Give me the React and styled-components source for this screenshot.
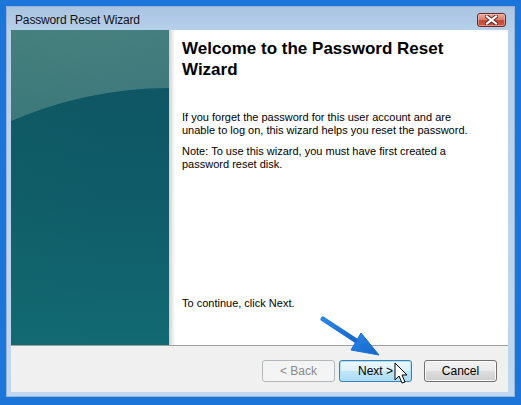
import React from "react";
import styled, { createGlobalStyle } from "styled-components";

const Global = createGlobalStyle`
  html, body { margin: 0; padding: 0; }
  body { background: #1c76da; font-family: "Liberation Sans", Arial, sans-serif; }
`;

const Screen = styled.div`
  width: 521px;
  height: 405px;
  box-sizing: border-box;
  padding: 6px 6px 8px 6px;
  background: #1c76da;
  position: relative;
  overflow: hidden;
`;

const Window = styled.div`
  height: 100%;
  box-sizing: border-box;
  display: flex;
  flex-direction: column;
  padding: 0 7px 5px 5px;
  background: linear-gradient(180deg, #a9c4e2 0px, #b6cfea 24px, #c1d7ef 100%);
  box-shadow: inset 0 0 0 1px #95b4d8;
`;

const TitleBar = styled.div`
  height: 24px;
  box-sizing: border-box;
  display: flex;
  align-items: center;
  justify-content: space-between;
  padding: 3px 2px 0 4px;
`;

const Title = styled.span`
  font-size: 12px;
  color: #111;
  letter-spacing: -0.15px;
`;

const CloseButton = styled.div`
  width: 29px;
  height: 14px;
  box-sizing: border-box;
  border: 1px solid #6e2b26;
  border-radius: 3px;
  background: linear-gradient(180deg, #e9a999 0%, #d98472 45%, #c44a38 55%, #c95a44 100%);
  box-shadow: inset 0 0 0 1px rgba(255, 200, 190, 0.5);
  display: flex;
  align-items: center;
  justify-content: center;
`;

const Body = styled.div`
  flex: 1;
  display: flex;
  flex-direction: column;
  background: #fff;
  position: relative;
`;

const Top = styled.div`
  flex: 1;
  display: flex;
`;

const SidePanel = styled.div`
  width: 158px;
  position: relative;
  overflow: hidden;
  background: linear-gradient(165deg, #4a8280 0%, #3a757a 40%, #2b6770 100%);
  &::after {
    content: "";
    position: absolute;
    left: -262px;
    top: 58px;
    width: 840px;
    height: 900px;
    border-radius: 50%;
    background: linear-gradient(180deg, #0e5663 0px, #0f5c68 110px, #11646e 200px, #126a73 260px);
  }
  &::before {
    content: "";
    position: absolute;
    left: 0;
    top: 0;
    bottom: 0;
    width: 100%;
    z-index: 1;
    background: linear-gradient(90deg, rgba(20, 110, 100, 0.1), rgba(0, 0, 0, 0) 60%);
  }
`;

const Shade = styled.div`
  width: 6px;
  background: linear-gradient(90deg, #cfcfcf, #e8e8e8 50%, #ffffff);
`;

const Content = styled.div`
  flex: 1;
  display: flex;
  flex-direction: column;
  padding: 8px 10px 35px 7px;
  color: #000;
`;

const Heading = styled.h1`
  margin: 0 0 31px 0;
  font-family: "Liberation Sans", Arial, sans-serif;
  font-weight: bold;
  font-size: 17px;
  line-height: 21px;
  color: #000;
`;

const Para = styled.p`
  margin: 0 0 ${(p) => p.$gap || 0}px 0;
  font-size: 11px;
  line-height: 13px;
`;

const Spacer = styled.div`
  flex: 1;
`;

const ButtonBar = styled.div`
  height: 47px;
  box-sizing: border-box;
  border-top: 1px solid #a0a0a0;
  background: #f0f0f0;
  display: flex;
  justify-content: flex-end;
  align-items: flex-start;
  padding: 14px 11px 0 0;
  gap: 4px;
`;

const Button = styled.div`
  width: 73px;
  height: 22px;
  box-sizing: border-box;
  border-radius: 3px;
  display: flex;
  align-items: center;
  justify-content: center;
  font-size: 12px;
  margin-left: ${(p) => p.$ml || 0}px;
  color: ${(p) => (p.$disabled ? "#8a8a8a" : "#000")};
  border: 1px solid
    ${(p) => (p.$disabled ? "#b5b8ba" : p.$focus ? "#3c7fb1" : "#707070")};
  background: ${(p) =>
    p.$disabled
      ? "#f4f4f4"
      : p.$focus
      ? "linear-gradient(180deg, #ecf7fd 0%, #dcf1fc 48%, #c1e6fc 52%, #a9dbf6 100%)"
      : "linear-gradient(180deg, #f2f2f2 0%, #ebebeb 48%, #dddddd 52%, #cfcfcf 100%)"};
  box-shadow: ${(p) =>
    p.$disabled
      ? "none"
      : p.$focus
      ? "inset 0 0 0 1px #aee2f8"
      : "inset 0 0 0 1px #fbfbfb"};
`;

const Overlay = styled.svg`
  position: absolute;
  left: 0;
  top: 0;
  pointer-events: none;
`;

export default function App() {
  return (
    <>
      <Global />
      <Screen>
        <Window>
          <TitleBar>
            <Title>Password Reset Wizard</Title>
            <CloseButton>
              <svg width="13" height="10" viewBox="0 0 13 10">
                <path d="M2 1.5 L11 8.5 M11 1.5 L2 8.5" stroke="#5a2520" strokeWidth="4" strokeLinecap="square" />
                <path d="M2 1.5 L11 8.5 M11 1.5 L2 8.5" stroke="#ffffff" strokeWidth="2.2" strokeLinecap="square" />
              </svg>
            </CloseButton>
          </TitleBar>
          <Body>
            <Top>
              <SidePanel />
              <Shade />
              <Content>
                <Heading>
                  Welcome to the Password Reset
                  <br />
                  Wizard
                </Heading>
                <Para $gap={8}>
                  If you forget the password for this user account and are
                  <br />
                  unable to log on, this wizard helps you reset the password.
                </Para>
                <Para>
                  Note: To use this wizard, you must have first created a
                  <br />
                  password reset disk.
                </Para>
                <Spacer />
                <Para>To continue, click Next.</Para>
              </Content>
            </Top>
            <ButtonBar>
              <Button $disabled>&lt; Back</Button>
              <Button $focus>Next &gt;</Button>
              <Button $ml={8}>Cancel</Button>
            </ButtonBar>
          </Body>
        </Window>
        <Overlay width="521" height="405" viewBox="0 0 521 405">
          <defs>
            <linearGradient id="arr" x1="0" y1="0" x2="1" y2="1">
              <stop offset="0" stopColor="#2a86e6" />
              <stop offset="1" stopColor="#1565c8" />
            </linearGradient>
          </defs>
          <line x1="323" y1="319" x2="358" y2="342" stroke="url(#arr)" strokeWidth="5" strokeLinecap="round" />
          <polygon points="379,355 361,333 351,350" fill="url(#arr)" stroke="#1a6fd2" strokeWidth="1" strokeLinejoin="round" />
          <path
            d="M395 363 L395 380 L399 376 L402 383 L405 382 L402 375 L407 375 Z"
            fill="#ffffff"
            stroke="#000"
            strokeWidth="1"
            strokeLinejoin="round"
          />
        </Overlay>
      </Screen>
    </>
  );
}
